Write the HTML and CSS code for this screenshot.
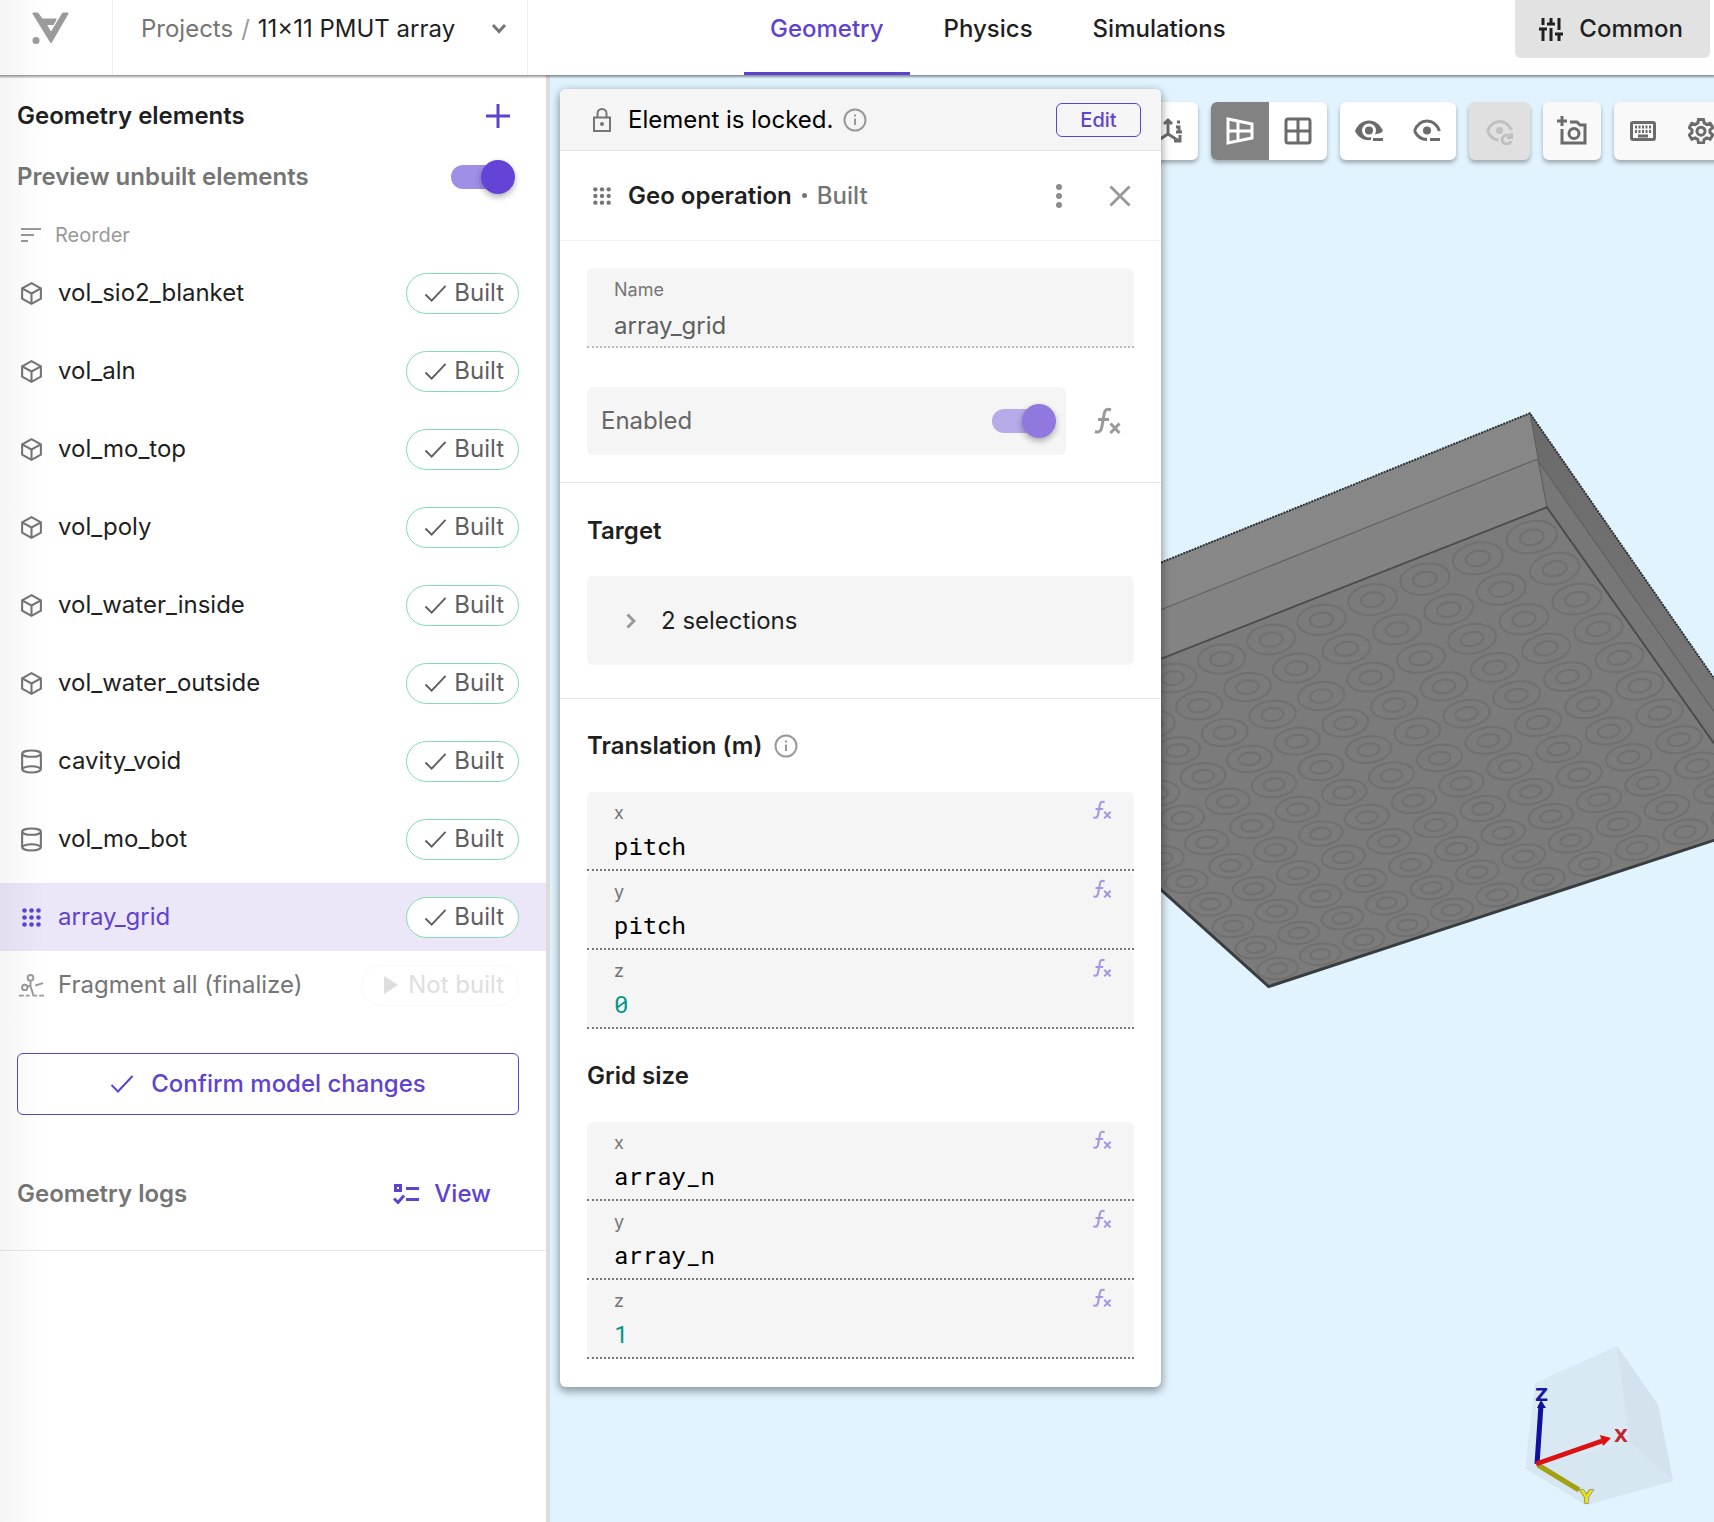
FILE: index.html
```html
<!DOCTYPE html>
<html lang="en">
<head>
<meta charset="utf-8">
<meta name="viewport" content="width=device-width, initial-scale=1">
<title>11×11 PMUT array – Geometry</title>
<link rel="stylesheet" href="styles.css">
</head>
<body>
<svg class="sprite" aria-hidden="true">
  <symbol id="cube" viewBox="0 0 24 24"><path d="M12 2 21 7v10l-9 5-9-5V7zM3.400 7.300 12 12l8.600-4.700M12 12v10"/></symbol>
  <symbol id="cylinder" viewBox="0 0 24 24"><ellipse cx="12" cy="4.500" rx="9" ry="3"/><path d="M3 4.500v15c0 1.700 4 3 9 3s9-1.300 9-3v-15M3 19.500c1-2 4.500-3 9-3s8 1 9 3"/></symbol>
  <symbol id="dots" viewBox="0 0 24 24"><g fill="currentColor" stroke="none"><circle cx="4" cy="4" r="2.600"/><circle cx="12" cy="4" r="2.600"/><circle cx="20" cy="4" r="2.600"/><circle cx="4" cy="12" r="2.600"/><circle cx="12" cy="12" r="2.600"/><circle cx="20" cy="12" r="2.600"/><circle cx="4" cy="20" r="2.600"/><circle cx="12" cy="20" r="2.600"/><circle cx="20" cy="20" r="2.600"/></g></symbol>
  <symbol id="fragment" viewBox="0 0 26 26"><circle cx="12" cy="5" r="3"/><circle cx="6" cy="15" r="2.800"/><path d="M12 8v6l3 9M8.500 14l4-1M17 13l8-2.500M0 23.500h5m2 0h4m3 0h5m2 0h5"/></symbol>
  <symbol id="check" viewBox="0 0 24 24"><path d="m1.500 13 6.500 6.500L22.500 4"/></symbol>
  <symbol id="info" viewBox="0 0 24 24"><circle cx="12" cy="12" r="10.500"/><path d="M12 10.500V17M12 6.500v2"/></symbol>
  <symbol id="fx" viewBox="0 0 30 28"><path d="M2 24.500c4 1.500 6-.5 6.700-4L11.300 6c.7-3.500 3-4.500 6.700-3M5 12.500h11M17.500 16.500l9 9.500M26.500 16.500l-9 9.500"/></symbol>
  <symbol id="eye" viewBox="0 0 28 24"><path d="M1.500 12C4 5.500 8.500 2 14 2s10 3.500 12.500 10M1.500 12C4 17 8 20.500 14 20.500M17 20.500h10"/><circle cx="14" cy="11.500" r="4" fill="currentColor" stroke="none"/></symbol>
</svg>

<header class="topbar">
  <a class="logo" href="#" aria-label="Home">
    <svg width="38" height="34" viewBox="0 0 38 34"><path d="M2.500 2.500H6.500L11 8.500H24.500L22 13H14.500L20 22.500 32 2.500H36.500L20 31z" fill="#9b9b9b" stroke="#9b9b9b" stroke-width="2" stroke-linejoin="round"/><circle cx="5" cy="29.500" r="3.500" fill="#9b9b9b" stroke="none"/></svg>
  </a>
  <nav class="crumbs" aria-label="Breadcrumb">
    <a href="#">Projects</a><span class="slash">/</span><span class="current">11×11 PMUT array</span>
    <button class="icon-btn" aria-label="Switch project"><svg width="16" height="12" viewBox="0 0 16 12"><path d="m2 2 6 6.500L14 2"/></svg></button>
  </nav>
  <nav class="tabs" aria-label="Sections">
    <a class="tab active" href="#">Geometry</a>
    <a class="tab" href="#">Physics</a>
    <a class="tab" href="#">Simulations</a>
  </nav>
  <button class="common">
    <svg width="24" height="24" viewBox="0 0 24 24"><path d="M4 1v7M4 13v11M0 12h8M12 1v6M8 7h8M12 11v13M20 1v12M16 17h8M20 17v7"/></svg>
    Common
  </button>
</header>

<div class="workspace">
  <aside class="sidebar">
    <div class="side-row add-row">
      <h2>Geometry elements</h2>
      <button class="icon-btn accent" aria-label="Add element"><svg width="24" height="24" viewBox="0 0 24 24"><path class="heavy" d="M12 0v24M0 12h24"/></svg></button>
    </div>
    <div class="side-row preview-row">
      <label for="preview">Preview unbuilt elements</label>
      <input class="switch" id="preview" type="checkbox" checked>
    </div>
    <button class="reorder"><svg width="20" height="16" viewBox="0 0 20 16"><path d="M0 2h20M0 8h13M0 14h7"/></svg>Reorder</button>

    <ul class="elements">
      <li><button class="name"><svg><use href="#cube"/></svg>vol_sio2_blanket</button><span class="chip"><svg><use href="#check"/></svg>Built</span></li>
      <li><button class="name"><svg><use href="#cube"/></svg>vol_aln</button><span class="chip"><svg><use href="#check"/></svg>Built</span></li>
      <li><button class="name"><svg><use href="#cube"/></svg>vol_mo_top</button><span class="chip"><svg><use href="#check"/></svg>Built</span></li>
      <li><button class="name"><svg><use href="#cube"/></svg>vol_poly</button><span class="chip"><svg><use href="#check"/></svg>Built</span></li>
      <li><button class="name"><svg><use href="#cube"/></svg>vol_water_inside</button><span class="chip"><svg><use href="#check"/></svg>Built</span></li>
      <li><button class="name"><svg><use href="#cube"/></svg>vol_water_outside</button><span class="chip"><svg><use href="#check"/></svg>Built</span></li>
      <li><button class="name"><svg><use href="#cylinder"/></svg>cavity_void</button><span class="chip"><svg><use href="#check"/></svg>Built</span></li>
      <li><button class="name"><svg><use href="#cylinder"/></svg>vol_mo_bot</button><span class="chip"><svg><use href="#check"/></svg>Built</span></li>
      <li class="selected"><button class="name"><svg class="dots"><use href="#dots"/></svg>array_grid</button><span class="chip"><svg><use href="#check"/></svg>Built</span></li>
    </ul>
    <div class="final">
      <button class="name"><svg><use href="#fragment"/></svg>Fragment all (finalize)</button>
      <span class="chip pending"><svg width="14" height="18" viewBox="0 0 14 18"><path d="M0 0 14 9 0 18z" fill="currentColor" stroke="none"/></svg>Not built</span>
    </div>
    <button class="confirm"><svg width="24" height="24"><use href="#check"/></svg>Confirm model changes</button>
    <div class="side-row logs">
      <h2>Geometry logs</h2>
      <button class="view"><svg width="26" height="20" viewBox="0 0 26 20"><path class="heavy" d="M2.500 1.500h5v5h-5zM13 4.500h13M13 15.500h13M1 14.500l4 4 6-7"/></svg>View</button>
    </div>
  </aside>

  <main class="viewport">
    <svg class="scene" viewBox="550 76 1164 1446" preserveAspectRatio="xMaxYMin slice" role="img" aria-label="Array model">
      <defs>
        <linearGradient id="side" x1="0" y1="0" x2="0" y2="1"><stop offset="0" stop-color="#6a6a6a"/><stop offset="1" stop-color="#7c7c7c"/></linearGradient>
      </defs>
      <path d="M900 669 1530 414 1780 774 1780 820 1269 987 900 655z" fill="#7b7b7b"/>
      <path d="M900 669 1530 414 1547 508 900 762z" fill="#878787"/>
      <path d="M900 715 1537 460 1547 508 900 762z" fill="#838383"/>
      <path d="M1530 414 1780 774V838L1547 508z" fill="url(#side)"/>
      <path d="M1537 460 1714 712V744L1547 508z" fill="#777"/>
      <g id="cells" fill="none" stroke="#707070" stroke-width="2"></g>
      <path d="M900 715 1537 460 1714 712M1530 414 1547 508" fill="none" stroke="#5d5d5d" stroke-width="1"/>
      <path d="M900 762 1547 508 1714 744" fill="none" stroke="#4c4c4c" stroke-width="2"/>
      <path d="M900 669 1530 414 1780 774" fill="none" stroke="#2d3438" stroke-width="2" stroke-dasharray="2 1"/>
      <path d="M900 655 1269 987 1780 819" fill="none" stroke="#3a3d3f" stroke-width="3"/>
    </svg>

    <div class="toolbar" role="toolbar" aria-label="View tools">
      <div class="group">
        <button aria-label="Reset view"></button>
        <button aria-label="Axes"><svg width="28" height="28" viewBox="0 0 28 28"><path d="M13 17V4M9 7l4-4 4 4M13 17 2 24M13 17l11 7M25 18v6h-6M21 10h3v5M21 15h6M22 5h3"/></svg></button>
      </div>
      <div class="group">
        <button class="on" aria-label="Perspective"><svg width="28" height="28" viewBox="0 0 28 28"><path class="heavy" d="M2 2 26 7v14L2 26zM12 4v20M2 14h24"/></svg></button>
        <button aria-label="Grid"><svg width="28" height="28" viewBox="0 0 28 28"><rect x="2" y="2" width="24" height="24" rx="2"/><path d="M14 2v24M2 14h24"/></svg></button>
      </div>
      <div class="group">
        <button aria-label="Hide others"><svg width="28" height="24" viewBox="0 0 28 24"><path d="M0 12C3 5 8 1.500 14 1.500S25 5 28 12c-1.500 2-5 3-12 4v5C8 22 3 18 0 12z" fill="currentColor" stroke="none"/><circle cx="14" cy="11.500" r="5.500" fill="currentColor" stroke="#fff"/><path d="M18 20.500h10"/></svg></button>
        <button aria-label="Hide selected"><svg width="28" height="24"><use href="#eye"/></svg></button>
      </div>
      <div class="group off">
        <button aria-label="Restore visibility" disabled><svg width="28" height="28" viewBox="0 0 28 28"><path d="M1.500 14C4 8 8 4.500 13.500 4.500S23 8 25.500 13M1.500 14c2 5 6 8.500 11 9M24 19.500a4.500 4.500 0 1 0 1 4.500M25.500 16v4.500H21"/><circle cx="13.500" cy="13.500" r="3.500" fill="currentColor" stroke="none"/></svg></button>
      </div>
      <div class="group soft">
        <button aria-label="Add screenshot"><svg width="30" height="30" viewBox="0 0 30 30"><path d="M5 0v10M0 5h10M13 6h7l3 3h5v18H5V13"/><circle cx="17" cy="17.500" r="5"/></svg></button>
      </div>
      <div class="group soft">
        <button aria-label="Shortcuts"><svg width="26" height="20" viewBox="0 0 26 20"><rect x="1.500" y="1.500" width="23" height="17" rx="1.500"/><path d="M5 6h16M5 10.500h16" stroke-dasharray="2 1.500"/><path d="M8 15h10"/></svg></button>
        <button aria-label="Settings"><svg width="26" height="26" viewBox="0 0 26 26"><path d="M10.500 1.500h5l.7 3.500 2.600 1.500 3.400-1.200 2.500 4.300-2.700 2.400v2.500l2.700 2.400-2.500 4.300-3.400-1.200-2.600 1.500-.7 3.500h-5l-.7-3.500-2.600-1.500-3.400 1.200L1.300 17l2.700-2.500V12L1.300 9.600l2.500-4.300 3.400 1.200L9.800 5z"/><circle cx="13" cy="13.200" r="4"/></svg></button>
      </div>
    </div>

    <section class="panel" aria-label="Geo operation">
      <div class="locked">
        <svg width="20" height="26" viewBox="0 0 20 26"><path d="M2 10.500h16V24H2zM5.500 10V6.500a4.500 4.500 0 0 1 9 0V10"/><circle cx="10" cy="17" r="2" fill="currentColor" stroke="none"/></svg>
        <span>Element is locked.</span>
        <svg class="muted" width="24" height="24"><use href="#info"/></svg>
        <button class="edit">Edit</button>
      </div>
      <div class="title">
        <svg width="20" height="20"><use href="#dots"/></svg>
        <h2>Geo operation</h2><span class="bullet"></span><span class="state">Built</span>
        <button class="icon-btn more" aria-label="More"><svg width="8" height="24" viewBox="0 0 8 24"><g fill="currentColor" stroke="none"><circle cx="4" cy="3" r="3"/><circle cx="4" cy="12" r="3"/><circle cx="4" cy="21" r="3"/></g></svg></button>
        <button class="icon-btn close" aria-label="Close"><svg width="22" height="22" viewBox="0 0 22 22"><path class="heavy" d="m1.500 1.500 19 19M20.500 1.500l-19 19"/></svg></button>
      </div>

      <div class="block general">
        <div class="field name-field"><label for="el-name">Name</label><input id="el-name" type="text" value="array_grid" readonly></div>
        <div class="enabled-row">
          <div class="enabled"><label for="enabled">Enabled</label><input class="switch dim" id="enabled" type="checkbox" checked></div>
          <button class="icon-btn muted" aria-label="Expression"><svg width="30" height="28"><use href="#fx"/></svg></button>
        </div>
      </div>

      <div class="block target">
        <h3>Target</h3>
        <button class="selections"><svg width="10" height="16" viewBox="0 0 10 16"><path d="m1.500 1.500 6.500 6.500-6.500 6.500"/></svg>2 selections</button>
      </div>

      <div class="block vectors">
        <h3>Translation (m) <svg class="muted" width="24" height="24"><use href="#info"/></svg></h3>
        <div class="fields">
          <div class="field"><label for="tx">x</label><input id="tx" type="text" value="pitch"><svg class="fx"><use href="#fx"/></svg></div>
          <div class="field"><label for="ty">y</label><input id="ty" type="text" value="pitch"><svg class="fx"><use href="#fx"/></svg></div>
          <div class="field"><label for="tz">z</label><input id="tz" class="num" type="text" value="0"><svg class="fx"><use href="#fx"/></svg></div>
        </div>
        <h3>Grid size</h3>
        <div class="fields">
          <div class="field"><label for="gx">x</label><input id="gx" type="text" value="array_n"><svg class="fx"><use href="#fx"/></svg></div>
          <div class="field"><label for="gy">y</label><input id="gy" type="text" value="array_n"><svg class="fx"><use href="#fx"/></svg></div>
          <div class="field"><label for="gz">z</label><input id="gz" class="num" type="text" value="1"><svg class="fx"><use href="#fx"/></svg></div>
        </div>
      </div>
    </section>

    <svg class="gizmo" width="220" height="200" viewBox="0 0 220 200" role="img" aria-label="Orientation">
      <path d="M41 61 123 24 164 83 179 159 92 183 31 146z" fill="#d9e9f3"/>
      <path d="M123 24 164 83 179 159 136 120z" fill="#d3e2ec"/>
      <path d="M31 146 136 120 179 159 92 183z" fill="#d7e7f1"/>
      <path d="M44 143 85 168" stroke="#a3a012" stroke-width="5"/>
      <path d="M43 142 47 83" stroke="#10109f" stroke-width="5"/>
      <path d="M43 86 47 78l5 8z" fill="#10109f"/>
      <path d="M42 142 108 119" stroke="#dd1111" stroke-width="5"/>
      <path d="M106 113 117 116 109 124z" fill="#e01010"/>
      <text x="41" y="79" fill="#17179f">Z</text>
      <text x="120" y="120" fill="#c4242c">X</text>
      <text x="86" y="181" fill="#e8e022" stroke="#666622" stroke-width="1" paint-order="stroke">Y</text>
    </svg>
  </main>
</div>
<script src="scene.js"></script>
</body>
</html>
```

FILE: styles.css
```css
:root {
  --accent: #5f43d0;
  --ink: #1f1f1f;
  --grey: #757575;
  --muted: #999;
  --field: #f5f5f5;
  --line: #e6e6e6;
}

* { box-sizing: border-box; }

body {
  margin: 0;
  min-height: 100vh;
  display: flex;
  flex-direction: column;
  overflow: hidden;
  font: 400 24px/32px Inter, "Liberation Sans", sans-serif;
  color: var(--ink);
  background: #fff;
}

/* soft shade along the window's left edge */
body::before {
  content: "";
  position: absolute;
  inset: 0 auto 0 0;
  width: 44px;
  background: linear-gradient(90deg, rgba(0, 0, 0, .04), rgba(0, 0, 0, 0));
  pointer-events: none;
  z-index: 9;
}

h2, h3 { margin: 0; font-size: 24px; line-height: 32px; font-weight: 600; }
a { color: inherit; text-decoration: none; }
button {
  border: 0;
  padding: 0;
  background: none;
  color: inherit;
  font: inherit;
  display: flex;
  align-items: center;
}
svg { flex: none; display: block; fill: none; stroke: currentColor; stroke-width: 2; }
.heavy { stroke-width: 3; }
.sprite { position: absolute; width: 0; height: 0; }
.muted { color: var(--muted); }

/* top bar */
.topbar {
  display: flex;
  height: 75px;
  position: relative;
  z-index: 5;
  background: #fff;
  box-shadow: 0 1px 2px 1px rgba(0, 0, 0, .4);
}
.logo {
  width: 113px;
  padding: 11px 0 0 31px;
  border-right: 1px solid #eee;
}
.crumbs {
  width: 415px;
  display: flex;
  align-items: center;
  padding: 0 20px 17px 28px;
  border-right: 1px solid #eee;
  color: var(--grey);
}
.slash { padding: 0 8px; color: var(--muted); }
.current { color: var(--ink); }
.crumbs .icon-btn { margin-left: auto; }
.crumbs svg { stroke-width: 3; }
.tabs { display: flex; gap: 8px; margin-left: 216px; font-weight: 500; }
.tab {
  display: flex;
  align-items: center;
  padding: 0 26px 14px;
  border-bottom: 3px solid transparent;
}
.tab.active { color: var(--accent); border-color: var(--accent); }
.common {
  height: 58px;
  margin: 0 4px 0 auto;
  padding: 0 27px 0 24px;
  gap: 16px;
  border-radius: 0 0 6px 6px;
  background: #e2e2e2;
  font-weight: 500;
}
.common svg { stroke-width: 3; }

/* sidebar */
.workspace { flex: 1; display: flex; }
.sidebar {
  width: 550px;
  flex: none;
  border-right: 4px solid #dcdcdc;
}
.side-row {
  display: flex;
  align-items: center;
  justify-content: space-between;
  padding: 0 31px 0 17px;
}
.add-row { padding: 24px 36px 0 17px; height: 57px; }
.accent { color: var(--accent); }
.preview-row { height: 34px; margin-top: 28px; color: var(--grey); font-weight: 600; }
.reorder {
  height: 32px;
  margin: 25px 0 0 21px;
  gap: 14px;
  font-size: 20px;
  color: var(--muted);
}
.elements {
  list-style: none;
  margin: 8px 0 0;
  padding: 0;
  display: grid;
  gap: 10px;
}
.elements li, .final {
  height: 68px;
  display: flex;
  align-items: center;
  justify-content: space-between;
  padding: 0 27px 0 19px;
}
.name { gap: 14px; }
.name svg { width: 25px; height: 25px; color: var(--grey); }
.name .dots { padding: 2px; }
.selected { background: #ebe7f9; }
.selected .name, .selected .name svg { color: var(--accent); }
.chip {
  height: 41px;
  display: flex;
  align-items: center;
  gap: 7px;
  padding: 0 14px 0 17px;
  border: 1px solid #7fdcb4;
  border-radius: 21px;
  background: #fff;
  color: #5f5f5f;
}
.chip svg { width: 23px; height: 23px; stroke-width: 2; }
.final .name { color: var(--grey); }
.final .name svg { color: var(--muted); }
.pending { padding-left: 22px; border-color: #f5faf8; color: #dedede; gap: 10px; }
.pending svg { width: 14px; height: 18px; }
.confirm {
  height: 62px;
  width: calc(100% - 44px);
  margin: 34px 0 0 17px;
  justify-content: center;
  gap: 17px;
  border: 1px solid var(--accent);
  border-radius: 6px;
  color: var(--accent);
  font-weight: 500;
}
.logs { height: 136px; padding: 22px 55px 0 17px; border-bottom: 1px solid var(--line); color: var(--grey); }
.view { gap: 15px; color: var(--accent); font-weight: 500; }

.switch {
  appearance: none;
  position: relative;
  width: 64px;
  height: 34px;
  margin: 0;
  display: flex;
  align-items: center;
}
.switch::before {
  content: "";
  width: 60px;
  height: 24px;
  border-radius: 12px;
  background: #a18ee6;
}
.switch::after {
  content: "";
  position: absolute;
  right: 0;
  width: 34px;
  height: 34px;
  border-radius: 50%;
  background: #6344d6;
  box-shadow: 0 3px 6px rgba(0, 0, 0, .3);
}
.switch.dim::before { background: #b9abe9; }
.switch.dim::after { background: #9078df; }

/* viewport */
.viewport {
  flex: 1;
  min-width: 0;
  position: relative;
  overflow: hidden;
  padding: 14px 0 0 10px;
  background: #e1f3fe;
}
.scene { position: absolute; inset: 0; width: 100%; height: 100%; stroke: none; }
.toolbar {
  position: absolute;
  top: 27px;
  right: -16px;
  display: flex;
  gap: 13px;
  color: #6b6b6b;
}
.group {
  display: flex;
  height: 58px;
  border-radius: 6px;
  overflow: hidden;
  background: #fff;
  box-shadow: 0 3px 4px rgba(0, 0, 0, .3);
}
.group button { width: 58px; justify-content: center; }
.toolbar svg { stroke-width: 3; }
.toolbar .on { background: #828282; color: #fff; }
.soft { background: #f9f9f9; }
.off { background: #e0e0e0; }
.off button { width: 61px; color: #c0c0c0; }
.gizmo { position: absolute; right: 0; bottom: 0; stroke-width: 0; font: 700 18px "DejaVu Sans", sans-serif; }

/* element panel */
.panel {
  position: relative;
  width: 601px;
  padding-bottom: 28px;
  border-radius: 6px;
  background: #fff;
  box-shadow: 0 3px 8px 1px rgba(0, 0, 0, .4);
}
.locked {
  height: 62px;
  display: flex;
  align-items: center;
  gap: 10px;
  padding: 0 20px 0 32px;
  border-bottom: 1px solid var(--line);
  border-radius: 6px 6px 0 0;
  background: var(--field);
  color: #000;
}
.locked span { margin-left: 6px; }
.locked svg { color: var(--muted); }
.locked svg:first-child { color: var(--grey); }
.edit {
  width: 85px;
  height: 34px;
  margin-left: auto;
  justify-content: center;
  border: 1px solid var(--accent);
  border-radius: 6px;
  color: var(--accent);
  font-size: 20px;
  font-weight: 500;
}
.title {
  height: 90px;
  display: flex;
  align-items: center;
  padding: 0 30px 0 32px;
  border-bottom: 1px solid #f0f0f0;
  color: var(--grey);
}
.title h2 { margin-left: 16px; color: var(--ink); }
.bullet { width: 5px; height: 5px; margin: 0 10px; border-radius: 50%; background: var(--grey); }
.state { font-weight: 500; }
.more { margin-left: auto; color: #8c8c8c; }
.close { margin-left: 46px; color: var(--muted); }

.block { padding: 0 27px; }
.general { padding-top: 27px; padding-bottom: 27px; border-bottom: 1px solid var(--line); }
.field {
  display: flex;
  flex-direction: column;
  position: relative;
  height: 79px;
  padding: 9px 27px 0;
  border-bottom: 2px dotted #777;
  border-radius: 6px 6px 0 0;
  background: var(--field);
}
.field label { font-size: 18px; line-height: 24px; color: var(--grey); }
.field input {
  width: 100%;
  height: 32px;
  margin-top: 5px;
  padding: 0;
  border: 0;
  outline: 0;
  background: none;
  font: 24px/32px "Roboto Mono", "Liberation Mono", monospace;
  color: #000;
}
.field .num { color: #009688; }
.fx { position: absolute; top: 8px; right: 21px; width: 21px; height: 20px; color: #a796e6; stroke-width: 3; }
.name-field { height: 80px; padding-top: 10px; border-color: #bbb; }
.name-field input { font-family: Inter, "Liberation Sans", sans-serif; margin-top: 8px; color: #5f5f5f; }
.enabled-row { display: flex; align-items: center; margin-top: 39px; }
.enabled-row .icon-btn { margin: 0 11px 0 auto; }
.enabled-row .icon-btn svg { stroke-width: 3; }
.enabled {
  width: 479px;
  height: 68px;
  display: flex;
  align-items: center;
  justify-content: space-between;
  padding: 0 10px 0 14px;
  border-radius: 6px;
  background: var(--field);
  color: #666;
}
.target { padding-top: 32px; padding-bottom: 33px; border-bottom: 1px solid var(--line); }
.selections {
  width: 100%;
  height: 89px;
  margin-top: 29px;
  padding-left: 39px;
  gap: 25px;
  border-radius: 6px;
  background: var(--field);
}
.selections svg { color: var(--muted); stroke-width: 3; }
.vectors { padding-top: 31px; }
.vectors h3 { display: flex; align-items: center; gap: 12px; }
.fields { margin-top: 30px; }
.fields + h3 { margin-top: 31px; }
```

FILE: scene.js
```js
// Corner cells of the 11 x 11 array in scene coordinates.
const corners = [[1532, 538], [1032, 734], [1278, 969], [1734, 816]];
const [[x0, y0], [x1, y1], [x2, y2], [x3, y3]] = corners;

// Perspective mapping from the unit square to the four corners.
const dx1 = x1 - x2, dx2 = x3 - x2, sx = x0 - x1 + x2 - x3;
const dy1 = y1 - y2, dy2 = y3 - y2, sy = y0 - y1 + y2 - y3;
const det = dx1 * dy2 - dx2 * dy1;
const g = (sx * dy2 - dx2 * sy) / det;
const h = (dx1 * sy - sx * dy1) / det;
const project = (u, v) => {
  const w = g * u + h * v + 1;
  const x = ((x1 - x0 + g * x1) * u + (x3 - x0 + h * x3) * v + x0) / w;
  const y = ((y1 - y0 + g * y1) * u + (y3 - y0 + h * y3) * v + y0) / w;
  return x.toFixed(1) + " " + y.toFixed(1);
};

const ring = (i, j, r, sides) => {
  const points = [];
  for (let k = 0; k < sides; k++) {
    const a = (2 * Math.PI * k) / sides;
    points.push(project((i + r * Math.cos(a)) / 10, (j + r * Math.sin(a)) / 10));
  }
  return "M" + points.join("L") + "Z";
};

let d = "";
for (let i = 0; i < 11; i++) {
  for (let j = 0; j < 11; j++) {
    d += ring(i, j, 0.43, 16) + ring(i, j, 0.21, 10);
  }
}
const path = document.createElementNS("http://www.w3.org/2000/svg", "path");
path.setAttribute("d", d);
document.getElementById("cells").append(path);
```
